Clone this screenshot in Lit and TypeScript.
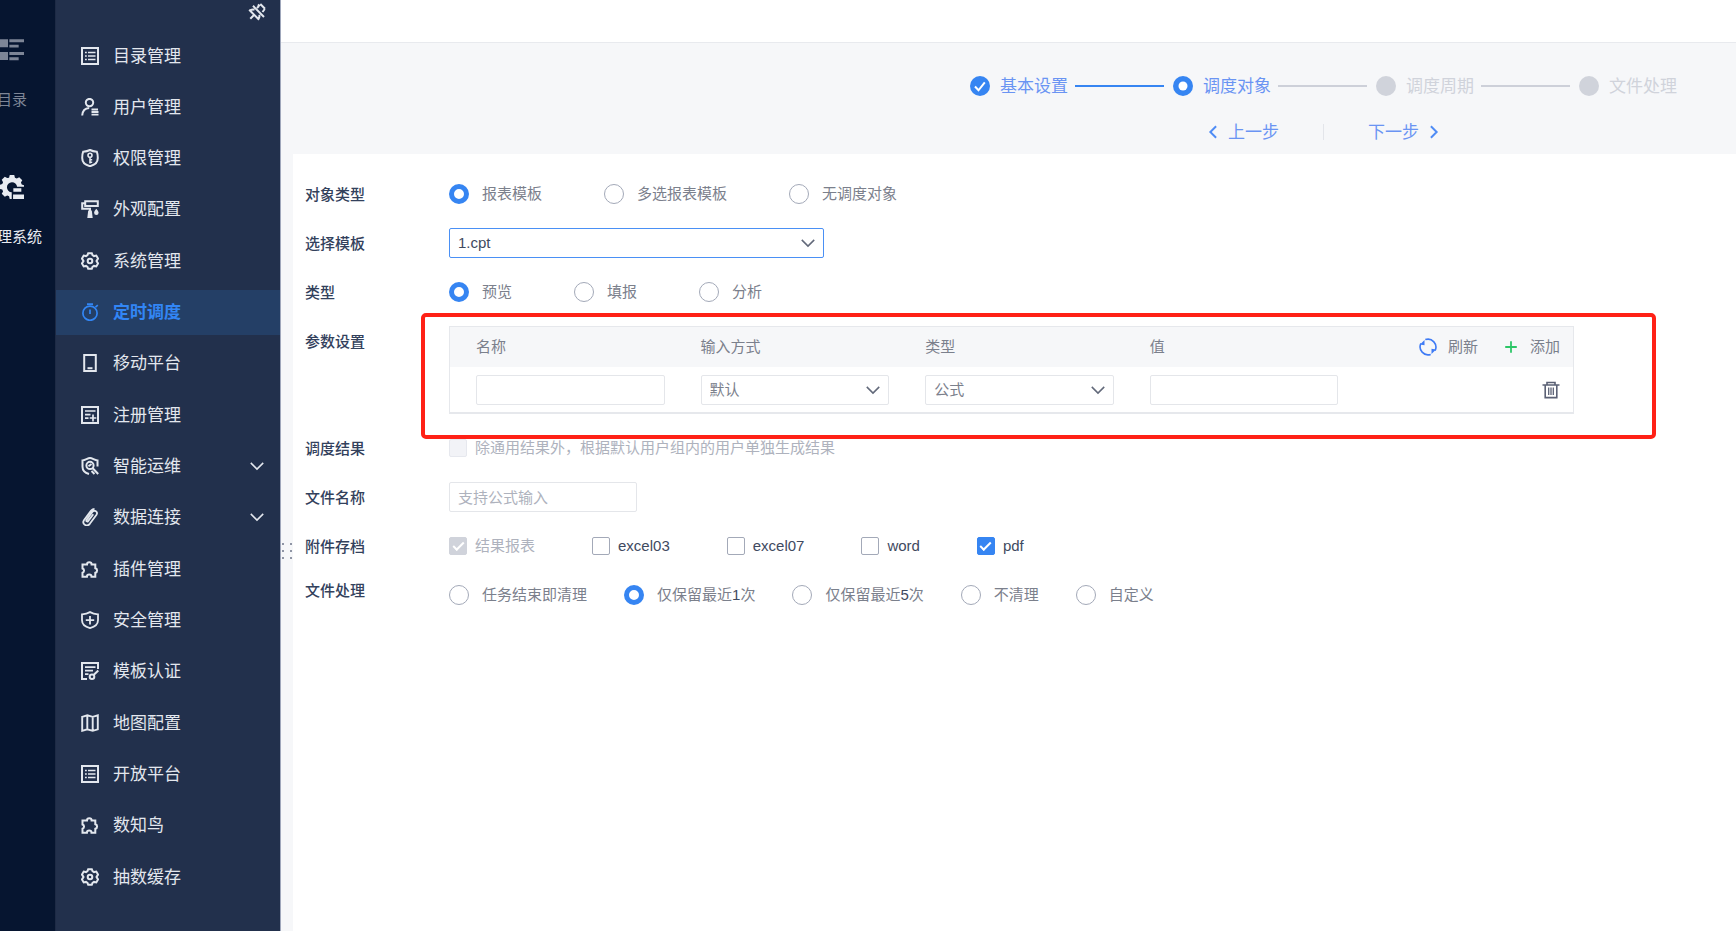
import { LitElement, html, css, svg, nothing, SVGTemplateResult } from "lit";
import { customElement, property, state } from "lit/decorators.js";
import { classMap } from "lit/directives/class-map.js";

const GEAR = svg`<path d="M7.200 1.200h3.600l.7 2 1.500.9 2.300-.5 1.700 3L15.500 9l1.500 2.400-1.700 3-2.300-.5-1.500.9-.7 2H7.200l-.7-2-1.500-.9-2.300.5-1.700-3L2.500 9 1 6.600l1.700-3 2.300.5 1.500-.9z"/><circle cx="9" cy="9" r="2.300"/>`;
const LIST = svg`<path d="M1 1h16v16H1z"/><path stroke-width="1.500" d="M4 5.500h1.800M7 5.500h7.500M4 9h1.800M7 9h7.500M4 12.500h1.800M7 12.500h7.500"/>`;
const PUZZLE = svg`<path d="M1.500 4.500H6a2.300 2.300 0 1 1 4.600 0h3.700v3.800a2.300 2.300 0 0 1 0 4.500v4h-3.800a2.300 2.300 0 0 0-4.600 0H1.500v-4.100a2.200 2.200 0 0 0 0-4.200z"/>`;

const ICONS: Record<string, SVGTemplateResult> = {
  list: LIST,
  gear: GEAR,
  puzzle: PUZZLE,
  user: svg`<circle cx="8.500" cy="4.600" r="3.700"/><path d="M1.200 17.500c.3-4.600 2.700-7.400 7-7.600"/><path stroke-width="1.800" d="M10.500 11.500h6.500M10.500 14h7M10.500 16.700h7"/>`,
  key: svg`<path d="M9 1c2 1 4.300 1.500 6.800 1.700.8 2 1 4 1 6.300 0 4.300-3 7-7.800 8.200C4.200 16 1.200 13.300 1.200 9c0-2.300.2-4.300 1-6.300C4.700 2.500 7 2 9 1z"/><circle cx="9" cy="6.300" r="2" stroke-width="1.600"/><path stroke-width="1.600" d="M9 8.500v6M9 10.800h2.200M9 13.300h2.200"/>`,
  roller: svg`<path d="M4.200 1.200h12.600v4.700H4.200zM4.200 3.300H1.200v5.400H9v2.500"/><path fill="currentColor" stroke="none" d="M7.200 10.500h3.600l.9 7.500H6.300zM15.300 8.700c1.500 1.800 2.300 3.100 2.300 4.100a2.200 2.200 0 0 1-4.500 0c0-1 .7-2.300 2.200-4.100z"/>`,
  timer: svg`<g stroke-width="1.700"><circle cx="9" cy="10.200" r="7.100"/><path d="M6 1.200h6M9 6.500v4.500M14.500 4.200l2.300-2"/></g>`,
  mobile: svg`<path d="M3.200 1h11.600v16H3.200z"/><path d="M6.500 14.200h5"/>`,
  register: svg`<path d="M17 17H1V1h16z"/><path stroke-width="1.700" d="M4 5h10.500M4 8.700h5.500M4 12.200h3.500M12 8.500v7M8.700 12h6.600"/>`,
  ops: svg`<path d="M16.500 9.500V3.400C13.500 3.300 11.500 1 9 1S4.500 3.300 1.500 3.400v6.300c0 3.800 2.500 6.100 6.500 7.300"/><circle cx="9" cy="8.400" r="3.600"/><path d="M11.500 11l5.700 6M7.500 9.200l3-2.200M10.500 14l3 3"/>`,
  clip: svg`<path stroke-width="1.800" d="M12.300 6.200l-5.200 6.900c-.8 1.100-2.400 0-1.600-1.200l6-8.100c1.900-2.500 5.800.2 4 2.900l-6.700 9.100c-3 3.600-8.400.3-5.700-3.900l6.800-9c.9-1.100 2.200-1.900 3.600-1.900"/>`,
  shield: svg`<path stroke-width="1.800" d="M9 1.100c2.300 1.300 4.900 2 8 2.200v6c0 4-3.400 6.600-8 7.800-4.600-1.200-8-3.800-8-7.800v-6c3.100-.2 5.700-.9 8-2.200z"/><path stroke-width="1.800" d="M9 5v8.500M4.800 9.200h8.400"/>`,
  cert: svg`<path d="M17 7V1H1v16h5"/><path stroke-width="1.700" d="M4 5.200h10.500M4 8.700h8M4 12.200h3.500"/><path d="M17.300 8.500l-4.700 4.500"/><circle cx="11" cy="14.700" r="2.300"/>`,
  map: svg`<path stroke-width="1.900" d="M1.200 2.800L6.300 1.300l5.400 1.500 5.100-1.500v14l-5.100 1.500-5.400-1.500-5.100 1.500zM6.300 1.300v14M11.700 2.800v14"/>`,
  pin: svg`<path d="M9.900 1.500l1.800 1.800M12.300 1l4.700 4.700M11 3l-2 2M14.500 9l2.300-3M2.300 7.300c1.500-.9 3-1 4.200-.6M1.200 6.800l9.900 9.900M10.600 15.800c.9-1.500 1-2.800.7-4M5.500 12.500L2.300 15.700M5 2.800l11 11.200"/>`,
  down: svg`<path stroke-width="1.700" d="M2 5.500l7 7 7-7"/>`,
  prev: svg`<path stroke-width="2.200" d="M12.500 2.500L6 9l6.500 6.500"/>`,
  next: svg`<path stroke-width="2.200" d="M5.500 2.500L12 9l-6.500 6.500"/>`,
  refresh: svg`<path stroke-width="1.600" d="M6.300 1.600A8 8 0 0 1 16.100 12.600M11.700 16.400A8 8 0 0 1 1.900 5.400"/><path fill="currentColor" stroke="none" d="M1 6.500L5.500 2v5.300zM17 11.500L12.500 16v-5.300z"/>`,
  plus: svg`<path d="M9 2.500v13M2.500 9h13"/>`,
  trash: svg`<path stroke-width="1.600" d="M.5 4h17M5 3.500V1.500h8v2M3.200 4v12.600h11.600V4"/><path stroke-width="1.300" d="M6.700 6.500v7.500M9 6.500v7.500M11.300 6.500v7.500"/>`,
  catalog: svg`<path fill="currentColor" stroke="none" d="M0 1h6v6H0zM7 1h11v2.200H7zM7 5h7v2.200H7zM0 10.500h6v6H0zM7 10.500h11v2.200H7zM7 14.500h7v2.200H7z"/>`,
  system: svg`<path fill="currentColor" stroke="none" fill-rule="evenodd" d="M7.300 0h3.400l.5 2 1.400.6 1.800-1 2.300 2.300-1 1.800.6 1.400 1.700.5v1.300h-5.200a3.800 3.800 0 1 0-4 4.100v5H7.300l-.5-2-1.400-.6-1.800 1-2.300-2.300 1-1.800-.6-1.400-2-.5V7.300l2-.5.6-1.400-1-1.800 2.300-2.300 1.800 1L6.800 2z"/><path fill="currentColor" stroke="none" d="M10 10h6v2.600h-6zM9.800 14.700H18v3.300H9.800z"/>`,
};

const icon = (name: string) =>
  html`<svg class="icon icon-${name}" viewBox="0 0 18 18" fill="none" stroke="currentColor" stroke-width="2" aria-hidden="true">${ICONS[name]}</svg>`;

const iconStyles = css`
  .icon { display: block; width: 18px; height: 18px; flex: none; }
`;

const MENU = [
  { icon: "list", label: "目录管理" },
  { icon: "user", label: "用户管理" },
  { icon: "key", label: "权限管理" },
  { icon: "roller", label: "外观配置" },
  { icon: "gear", label: "系统管理" },
  { icon: "timer", label: "定时调度", active: true },
  { icon: "mobile", label: "移动平台" },
  { icon: "register", label: "注册管理" },
  { icon: "ops", label: "智能运维", group: true },
  { icon: "clip", label: "数据连接", group: true },
  { icon: "puzzle", label: "插件管理" },
  { icon: "shield", label: "安全管理" },
  { icon: "cert", label: "模板认证" },
  { icon: "map", label: "地图配置" },
  { icon: "list", label: "开放平台" },
  { icon: "puzzle", label: "数知鸟" },
  { icon: "gear", label: "抽数缓存" },
];

@customElement("side-nav")
export class SideNav extends LitElement {
  static styles = [
    iconStyles,
    css`
      :host { display: flex; flex: none; }
      a { color: inherit; text-decoration: none; }
      button { border: 0; padding: 0; background: none; color: inherit; }
      .rail { width: 55px; overflow: hidden; background: #061530; color: #e8ebf1; font-size: 15px; }
      .rail-list { display: flex; flex-direction: column; gap: 65px; width: 24px; padding-top: 38px; }
      .rail-link { display: flex; flex-direction: column; align-items: center; gap: 28px; line-height: 20px; white-space: nowrap; }
      .rail-link .icon { width: 24px; height: 24px; }
      .dim { color: #7d8596; }
      .menu { display: flex; flex-direction: column; width: 224px; border-left: 1px solid #1d2a45; border-right: 1px solid #9fa7bb; background: #22304c; color: #e3e7ee; }
      .menu-top { display: flex; justify-content: flex-end; padding: 3px 14px 12px; }
      .items { display: flex; flex: 1; flex-direction: column; justify-content: space-between; margin: 0; padding: 0 0 32px; list-style: none; }
      .item { display: flex; align-items: center; gap: 14px; height: 45px; padding: 0 15px 0 25px; font-size: 17px; line-height: 24px; }
      .item.active { background: #243f66; color: #3286f5; font-weight: 700; }
      .label { flex: 1; padding-top: 2px; }
      .icon-down { width: 16px; height: 16px; }
    `,
  ];

  render() {
    return html`
      <nav class="rail" aria-label="主导航">
        <div class="rail-list">
          <a class="rail-link dim" href="#catalog">${icon("catalog")}<span>目录</span></a>
          <a class="rail-link" href="#system">${icon("system")}<span>管理系统</span></a>
        </div>
      </nav>
      <nav class="menu" aria-label="管理系统">
        <div class="menu-top"><button type="button" aria-label="取消固定">${icon("pin")}</button></div>
        <ul class="items">
          ${MENU.map(
            (m, i) => html`<li>
              <a class=${classMap({ item: true, active: !!m.active })} href="#menu-${i}">
                ${icon(m.icon)}<span class="label">${m.label}</span>${m.group ? icon("down") : nothing}
              </a>
            </li>`
          )}
        </ul>
      </nav>
    `;
  }
}

@customElement("step-header")
export class StepHeader extends LitElement {
  @property({ type: Number }) current = 1;

  static styles = [
    iconStyles,
    css`
      :host { display: flex; flex-direction: column; align-items: flex-end; padding: 30px 59px 9px; background: #f6f7f9; font-size: 17px; line-height: 24px; }
      .block { display: flex; flex-direction: column; align-items: center; gap: 20px; }
      .steps { display: flex; margin: 0; padding: 0; list-style: none; color: #d0d3db; }
      .step { display: flex; align-items: center; }
      .mark { display: block; width: 20px; height: 20px; margin-right: 10px; }
      .reached { color: #3685f2; }
      .name { padding-top: 2px; white-space: nowrap; }
      .reached .name, .move { color: #6a94f3; }
      .line { width: 89px; height: 2px; margin: 0 9px 0 7px; background: #cdd0d9; }
      .line.done { background: #3685f2; }
      .moves { display: flex; align-items: center; }
      .move { display: flex; align-items: center; gap: 7px; padding: 0; border: 0; background: none; font: inherit; }
      .move .icon { width: 16px; height: 16px; color: #4f8cf5; }
      .divider { width: 1px; height: 16px; margin: 0 44px; background: #e3e5ea; }
    `,
  ];

  private mark(i: number) {
    const inner =
      i < this.current
        ? svg`<path d="M5 10.500l3.500 3.800 6.300-8" fill="none" stroke="#fff" stroke-width="2"/>`
        : i === this.current
          ? svg`<circle cx="10" cy="10" r="4.500" fill="#fff"/>`
          : nothing;
    return html`<svg class="mark" viewBox="0 0 20 20" aria-hidden="true"><circle cx="10" cy="10" r="10" fill="currentColor"/>${inner}</svg>`;
  }

  render() {
    const names = ["基本设置", "调度对象", "调度周期", "文件处理"];
    return html`
      <div class="block">
        <ol class="steps">
          ${names.map(
            (n, i) => html`<li class=${classMap({ step: true, reached: i <= this.current })}>
              ${this.mark(i)}<span class="name">${n}</span>
              ${i < names.length - 1 ? html`<span class=${classMap({ line: true, done: i < this.current })}></span>` : nothing}
            </li>`
          )}
        </ol>
        <div class="moves">
          <button class="move" type="button">${icon("prev")}<span class="name">上一步</span></button>
          <span class="divider"></span>
          <button class="move" type="button"><span class="name">下一步</span>${icon("next")}</button>
        </div>
      </div>
    `;
  }
}

@customElement("schedule-form")
export class ScheduleForm extends LitElement {
  @state() private template = "1.cpt";

  static styles = [
    iconStyles,
    css`
      :host { display: block; padding: 25px 162px 25px 12px; background: #fff; color: #3f4a5f; font-size: 15px; line-height: 30px; }
      .form { display: flex; flex-direction: column; gap: 19px; }
      .row { display: grid; grid-template-columns: 144px minmax(0, 1fr); min-height: 30px; }
      .title { margin-bottom: -2px; font-weight: 500; line-height: 32px; color: #33415c; }
      .title.high { line-height: 22px; }
      .options { display: flex; align-items: center; gap: 62px; white-space: nowrap; }
      .options.close { gap: 37px; }
      .options.checks { gap: 57px; }
      .option { display: flex; align-items: center; gap: 13px; color: #7b808c; }
      .checks .option { gap: 8px; color: #3f4a5f; }
      .checks .option.off { color: #aeb2bd; }
      .digit { color: #3f4a5f; }
      input, select { box-sizing: border-box; margin: 0; font: inherit; color: inherit; appearance: none; outline: none; }
      input[type="radio"] { width: 20px; height: 20px; border: 1px solid #a3a9b8; border-radius: 50%; background: #fff; }
      input[type="radio"]:checked { border: 5px solid #3685f2; }
      input[type="checkbox"] { display: grid; place-items: center; width: 18px; height: 18px; border: 1px solid #a3a9b8; border-radius: 2px; background: #fff; }
      input[type="checkbox"]:checked { border-color: #3685f2; background: #3685f2; }
      input[type="checkbox"]:checked::before { content: ""; width: 9px; height: 4px; margin-bottom: 3px; border: solid #fff; border-width: 0 0 2px 2px; transform: rotate(-45deg); }
      input[type="checkbox"]:disabled { border-color: #e6e8ee; background: #f2f3f7; }
      input[type="checkbox"]:checked:disabled { border-color: #d0d3db; background: #d0d3db; }
      .text, .select select { width: 100%; height: 30px; padding: 0 8px; border: 1px solid #e4e6ea; border-radius: 2px; background: #fff; line-height: 28px; }
      .select select { display: block; }
      .text::placeholder { color: #aeb2bd; opacity: 1; }
      .text { display: block; }
      .short { width: 188px; }
      .select { position: relative; color: #7b808c; }
      .select.wide { width: 375px; color: #3f4a5f; }
      .select.wide select { border-color: #4a90f5; }
      .select .icon-down { position: absolute; top: 7px; right: 8px; width: 16px; height: 16px; color: #62697a; pointer-events: none; }
      .params { position: relative; }
      .frame { position: absolute; inset: -13px -82px -25px -28px; border: 4px solid #ff2116; border-radius: 5px; pointer-events: none; }
      .table { width: 100%; border: 1px solid #e6e8ec; border-bottom-width: 2px; border-collapse: separate; border-spacing: 0; table-layout: fixed; color: #7b808c; }
      .table th, .table td { padding: 0 10px 0 26px; font-weight: 400; text-align: left; }
      .table th { height: 40px; background: #f6f7f9; }
      .table td { height: 45px; }
      .table .tools-cell { padding: 0 13px 0 0; }
      .tools { display: flex; justify-content: flex-end; gap: 25px; }
      .tool { display: flex; align-items: center; gap: 11px; padding: 0; border: 0; background: none; color: inherit; font: inherit; }
      .icon-refresh { color: #3f7bf5; }
      .icon-plus { color: #2cc667; width: 16px; height: 16px; }
      .icon-trash { color: #5b6175; }
    `,
  ];

  private radios(name: string, labels: unknown[], selected: number, close = false) {
    return html`<div class=${classMap({ options: true, close })}>
      ${labels.map((l, i) => html`<label class="option"><input type="radio" name=${name} .checked=${i === selected} /><span>${l}</span></label>`)}
    </div>`;
  }

  private check(label: string, checked = false, disabled = false) {
    return html`<label class=${classMap({ option: true, off: disabled })}>
      <input type="checkbox" .checked=${checked} ?disabled=${disabled} /><span>${label}</span>
    </label>`;
  }

  render() {
    return html`
      <form class="form">
        <div class="row" role="group" aria-labelledby="t-object">
          <span class="title" id="t-object">对象类型</span>
          ${this.radios("object", ["报表模板", "多选报表模板", "无调度对象"], 0)}
        </div>
        <div class="row">
          <label class="title" for="template">选择模板</label>
          <div class="select wide"><select id="template"><option>${this.template}</option></select>${icon("down")}</div>
        </div>
        <div class="row" role="group" aria-labelledby="t-kind">
          <span class="title" id="t-kind">类型</span>
          ${this.radios("kind", ["预览", "填报", "分析"], 0)}
        </div>
        <div class="row">
          <span class="title" id="t-params">参数设置</span>
          <div class="params">
            <table class="table" aria-labelledby="t-params">
              <thead>
                <tr>
                  <th scope="col">名称</th>
                  <th scope="col">输入方式</th>
                  <th scope="col">类型</th>
                  <th scope="col">值</th>
                  <th class="tools-cell" scope="col">
                    <div class="tools">
                      <button class="tool" type="button">${icon("refresh")}刷新</button>
                      <button class="tool" type="button">${icon("plus")}添加</button>
                    </div>
                  </th>
                </tr>
              </thead>
              <tbody>
                <tr>
                  <td><input class="text" type="text" aria-label="名称" /></td>
                  <td><div class="select"><select aria-label="输入方式"><option>默认</option></select>${icon("down")}</div></td>
                  <td><div class="select"><select aria-label="类型"><option>公式</option></select>${icon("down")}</div></td>
                  <td><input class="text" type="text" aria-label="值" /></td>
                  <td class="tools-cell">
                    <div class="tools"><button class="tool" type="button" aria-label="删除">${icon("trash")}</button></div>
                  </td>
                </tr>
              </tbody>
            </table>
            <div class="frame"></div>
          </div>
        </div>
        <div class="row" role="group" aria-labelledby="t-result">
          <span class="title" id="t-result">调度结果</span>
          <div class="options checks">${this.check("除通用结果外，根据默认用户组内的用户单独生成结果", false, true)}</div>
        </div>
        <div class="row">
          <label class="title" for="file-name">文件名称</label>
          <input class="text short" id="file-name" type="text" placeholder="支持公式输入" />
        </div>
        <div class="row" role="group" aria-labelledby="t-archive">
          <span class="title" id="t-archive">附件存档</span>
          <div class="options checks">
            ${this.check("结果报表", true, true)}${this.check("excel03")}${this.check("excel07")}${this.check("word")}${this.check("pdf", true)}
          </div>
        </div>
        <div class="row" role="group" aria-labelledby="t-clean">
          <span class="title high" id="t-clean">文件处理</span>
          ${this.radios(
            "clean",
            ["任务结束即清理", html`仅保留最近<span class="digit">1</span>次`, html`仅保留最近<span class="digit">5</span>次`, "不清理", "自定义"],
            1,
            true
          )}
        </div>
      </form>
    `;
  }
}

@customElement("app-root")
export class AppRoot extends LitElement {
  static styles = css`
    :host { display: flex; min-height: 100vh; background: #fff; font-family: "Liberation Sans", "Noto Sans CJK SC", sans-serif; }
    .main { display: flex; flex: 1; flex-direction: column; min-width: 0; }
    .topbar { height: 42px; border-bottom: 1px solid #e8eaee; background: #fff; }
    .body { display: flex; flex: 1; }
    .gutter { width: 12px; flex: none; background: #f6f7f9; }
    .grip { display: grid; grid-template-columns: 2px 2px; justify-content: space-between; gap: 5px 0; padding: 389px 1px 0; }
    .dot { width: 2px; height: 2px; background: #8f95a5; }
    .form { flex: 1; min-width: 0; }
  `;

  render() {
    return html`
      <side-nav></side-nav>
      <main class="main">
        <div class="topbar"></div>
        <step-header .current=${1}></step-header>
        <div class="body">
          <div class="gutter"><div class="grip">${[0, 1, 2, 3, 4, 5].map(() => html`<i class="dot"></i>`)}</div></div>
          <schedule-form class="form"></schedule-form>
        </div>
      </main>
    `;
  }
}
